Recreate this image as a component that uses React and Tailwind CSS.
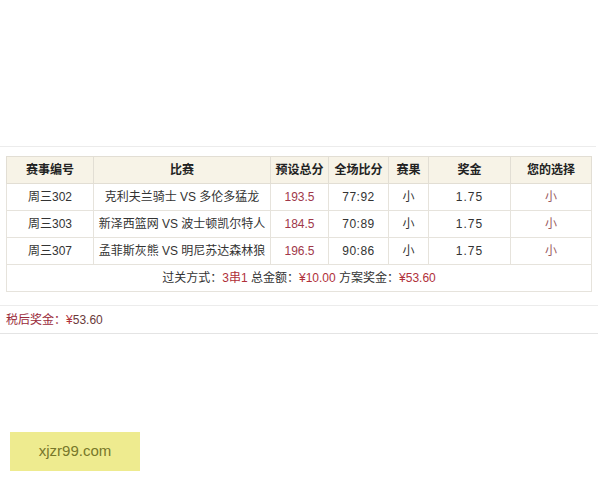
import React from "react";

const rows = [
  { id: "周三302", match: "克利夫兰骑士 VS 多伦多猛龙", total: "193.5", score: "77:92", result: "小", odds: "1.75", pick: "小" },
  { id: "周三303", match: "新泽西篮网 VS 波士顿凯尔特人", total: "184.5", score: "70:89", result: "小", odds: "1.75", pick: "小" },
  { id: "周三307", match: "孟菲斯灰熊 VS 明尼苏达森林狼", total: "196.5", score: "90:86", result: "小", odds: "1.75", pick: "小" },
];

const headers = ["赛事编号", "比赛", "预设总分", "全场比分", "赛果", "奖金", "您的选择"];
const widths = ["w-[87px]", "w-[177px]", "w-[58px]", "w-[60px]", "w-[40px]", "w-[82px]", "w-[81px]"];

export default function App() {
  return (
    <div className="w-[600px] h-[480px] bg-white text-[12px] text-[#333] font-['Liberation_Sans','Noto_Sans_CJK_SC',sans-serif] overflow-hidden">
      <div className="h-[146px]" />
      <div className="border-t border-[#ececec] w-[596px]" />

      <table className="ml-[6px] mt-[9px] w-[585px] table-fixed border-collapse">
        <colgroup>
          {widths.map((w, i) => (
            <col key={i} className={w} />
          ))}
        </colgroup>
        <thead>
          <tr className="h-[27px] bg-[#f7f3e7]">
            {headers.map((h) => (
              <th key={h} className="border border-[#e2ded4] font-bold text-[12px] text-[#222] text-center">
                {h}
              </th>
            ))}
          </tr>
        </thead>
        <tbody>
          {rows.map((r) => (
            <tr key={r.id} className="h-[27px] text-center">
              <td className="border border-[#e6e3dc]">{r.id}</td>
              <td className="border border-[#e6e3dc]">{r.match}</td>
              <td className="border border-[#e6e3dc] text-[#a0384a]">{r.total}</td>
              <td className="border border-[#e6e3dc] tracking-[0.5px]">{r.score}</td>
              <td className="border border-[#e6e3dc]">{r.result}</td>
              <td className="border border-[#e6e3dc] tracking-[1px]">{r.odds}</td>
              <td className="border border-[#e6e3dc] text-[#9a5a60]">{r.pick}</td>
            </tr>
          ))}
          <tr className="h-[27px]">
            <td colSpan={7} className="border border-[#e6e3dc] text-center">
              过关方式：<span className="text-[#b0303a]">3串1</span> 总金额：<span className="text-[#b0303a]">¥10.00</span> 方案奖金：<span className="text-[#b0303a]">¥53.60</span>
            </td>
          </tr>
        </tbody>
      </table>

      <div className="mt-[13px] border-t border-[#ececec] w-[598px]" />
      <div className="h-[28px] flex items-center pl-[6px] border-b border-[#e4e4e4] w-[598px]">
        <span className="text-[#9a2a3a]">税后奖金：</span>
        <span className="text-[#b0303a]">¥</span>
        <span className="text-[#6a3a3a]">53.60</span>
      </div>

      <div className="mt-[98px] ml-[10px] w-[130px] h-[39px] bg-[#eeeb8f] flex items-center justify-center">
        <span className="text-[15px] text-[#77772a] font-['Liberation_Sans',sans-serif]">xjzr99.com</span>
      </div>
    </div>
  );
}
